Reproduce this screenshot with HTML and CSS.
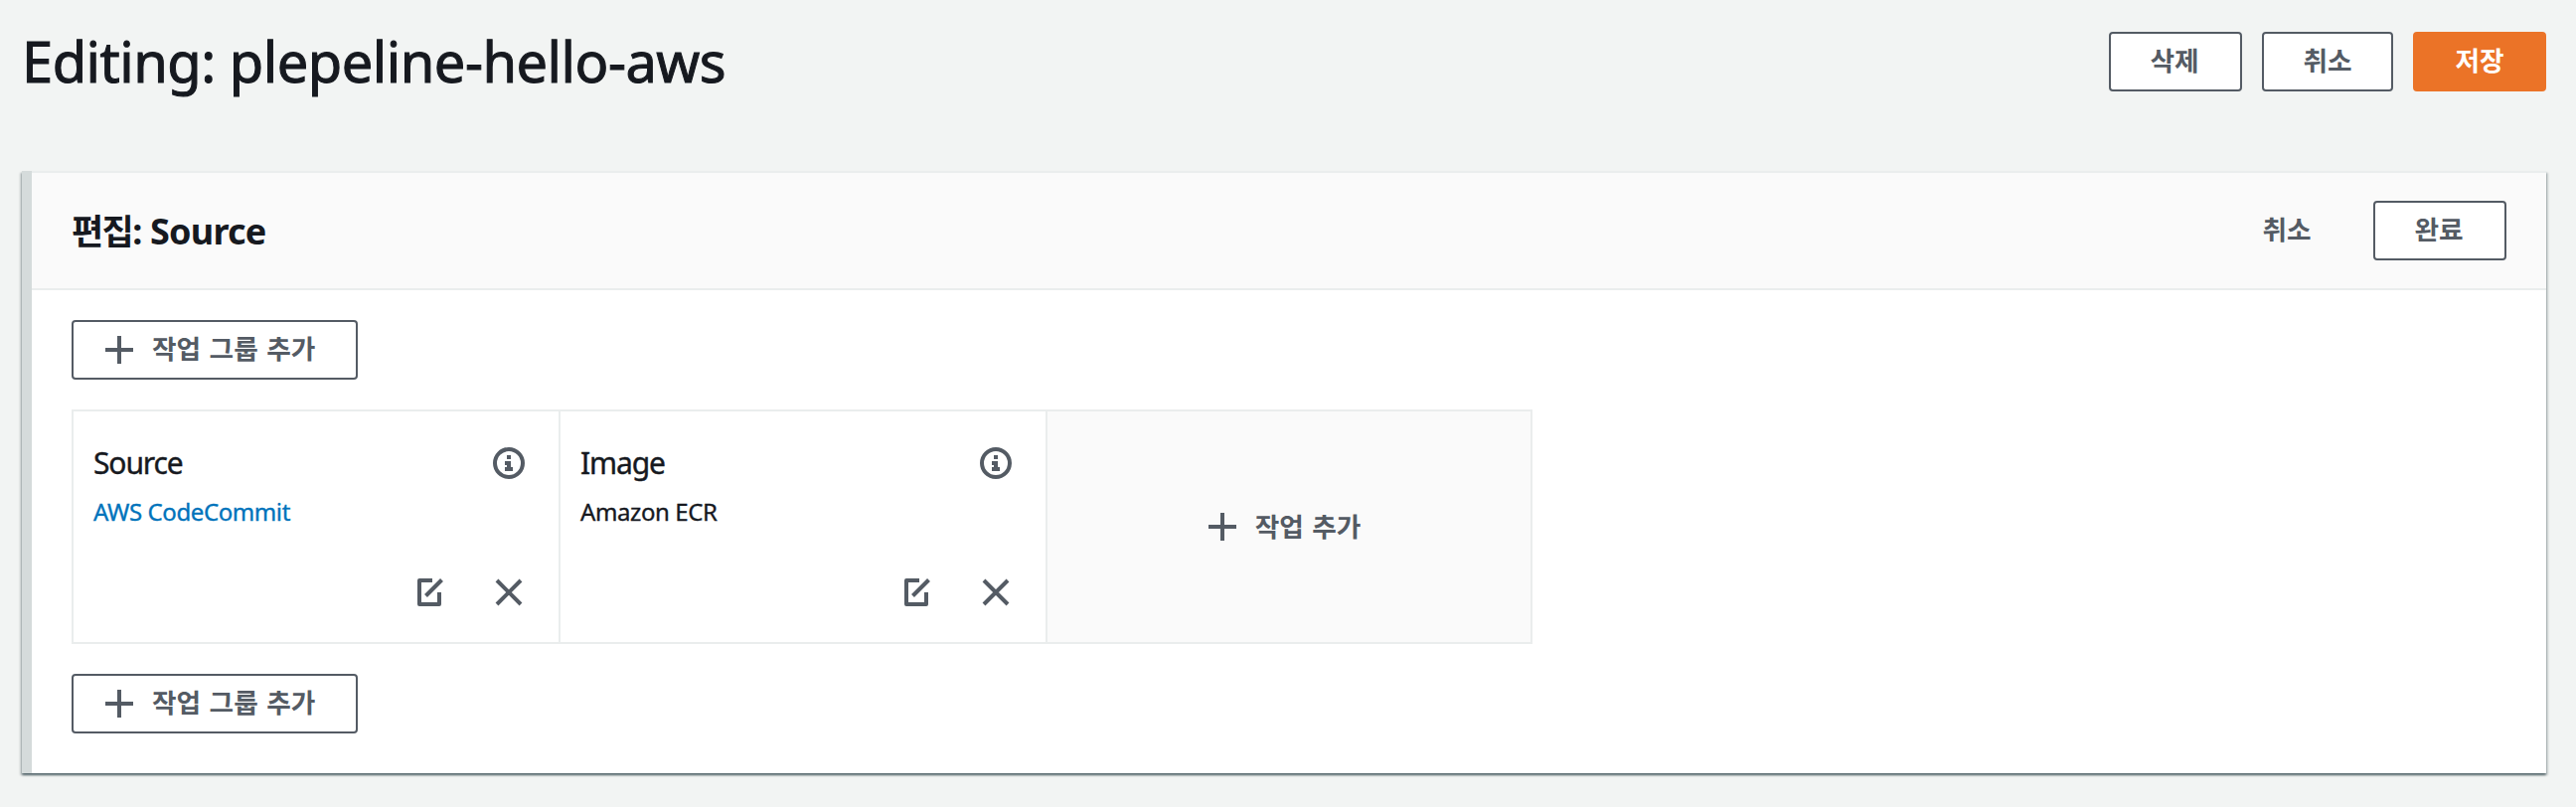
FILE: index.html
```html
<!DOCTYPE html>
<html lang="ko">
<head>
<meta charset="utf-8">
<title>Editing: plepeline-hello-aws</title>
<link rel="stylesheet" href="styles.css">
</head>
<body>
<svg width="0" height="0" class="sprite">
  <symbol id="plus" viewBox="0 0 32 32"><path d="M2 16h28M16 2v28"/></symbol>
  <symbol id="info" viewBox="0 0 32 32"><circle cx="16" cy="16" r="14"/><path class="solid" d="M14 8h4v4h-4zM12 14h6v6h2v4h-8v-4h2v-2h-2z"/></symbol>
  <symbol id="edit" viewBox="0 0 32 32"><path d="M19 4H6v24h20V16" stroke-linejoin="round"/><path d="M28.5 3.5L12.5 19.5"/></symbol>
  <symbol id="close" viewBox="0 0 32 32"><path d="M4 4l24 24M28 4L4 28"/></symbol>
</svg>
<header class="page-header">
  <h1>Editing: plepeline-hello-aws</h1>
  <div class="actions">
    <button class="btn">삭제</button>
    <button class="btn btn-mid">취소</button>
    <button class="btn primary">저장</button>
  </div>
</header>
<main class="stage">
  <div class="stage-header">
    <h2><span class="label">편집</span>: Source</h2>
    <div class="stage-actions">
      <button class="btn link">취소</button>
      <button class="btn">완료</button>
    </div>
  </div>
  <div class="stage-body">
    <button class="btn add-group"><svg class="plus"><use href="#plus"/></svg><span>작업 그룹 추가</span></button>
    <div class="group">
      <section class="cell">
        <div class="row"><h3>Source</h3><svg class="icon"><use href="#info"/></svg></div>
        <a class="provider provider-commit">AWS CodeCommit</a>
        <div class="tools"><svg class="icon edit"><use href="#edit"/></svg><svg class="icon"><use href="#close"/></svg></div>
      </section>
      <section class="cell">
        <div class="row"><h3>Image</h3><svg class="icon"><use href="#info"/></svg></div>
        <p class="provider">Amazon ECR</p>
        <div class="tools"><svg class="icon edit"><use href="#edit"/></svg><svg class="icon"><use href="#close"/></svg></div>
      </section>
      <button class="cell add-action"><svg class="plus"><use href="#plus"/></svg><span>작업 추가</span></button>
    </div>
    <button class="btn add-group"><svg class="plus"><use href="#plus"/></svg><span>작업 그룹 추가</span></button>
  </div>
</main>
</body>
</html>
```

FILE: styles.css
```css
* { box-sizing: border-box; }
body {
  margin: 0;
  height: 812px;
  background: #f2f4f3;
  color: #16191f;
  font-family: "Noto Sans", "Noto Sans CJK KR", sans-serif;
}
h1, h2, h3, p { margin: 0; }
.sprite { display: block; position: absolute; }
svg { fill: none; stroke: #545b64; stroke-width: 4; flex: none; }
.solid { fill: #545b64; stroke: none; }

.page-header {
  height: 172px;
  padding: 32px 30px 0 22px;
  display: flex;
  justify-content: space-between;
  align-items: flex-start;
}
h1 {
  font-size: 56px;
  line-height: 58px;
  font-weight: 400;
  letter-spacing: -.5px;
  -webkit-text-stroke: 1px #16191f;
}
.actions { display: flex; gap: 20px; }

.btn, .add-action {
  font-family: "Noto Sans CJK KR", sans-serif;
  font-size: 26.7px;
  font-weight: 700;
  color: #545b64;
  padding: 0;
}
.btn {
  width: 134px;
  height: 60px;
  line-height: 50px;
  padding: 0 2px 4px 0;
  border: 2px solid #545b64;
  border-radius: 4px;
  background: #fff;
}
.btn-mid { width: 132px; padding-right: 0; }
.primary { background: #eb7327; border-color: #eb7327; color: #fff; padding-right: 0; }
.link { background: transparent; border-color: transparent; width: 132px; padding: 0 0 4px 2px; }

.stage {
  margin: 0 30px 0 22px;
  height: 606px;
  background: #fff;
  border-left: 10px solid #d5dbdb;
  box-shadow: 0 2px 2px 0 rgba(0, 28, 36, .5), 2px 2px 2px 0 rgba(0, 28, 36, .15), -2px 2px 2px 0 rgba(0, 28, 36, .15);
}
.stage-header {
  height: 120px;
  padding: 0 40px;
  display: flex;
  justify-content: space-between;
  align-items: center;
  background: #fafafa;
  border-top: 2px solid #eaeded;
  border-bottom: 2px solid #eaeded;
}
h2 {
  font-size: 36px;
  line-height: 44px;
  padding-top: 2px;
  letter-spacing: -.8px;
}
.label { font-size: 35px; letter-spacing: -1.6px; }
.stage-actions { display: flex; gap: 22px; }
.stage-body { padding: 30px 40px; display: flex; flex-direction: column; align-items: flex-start; gap: 30px; }
.add-group {
  width: 288px;
  padding: 0 0 0 30px;
  display: flex;
  align-items: center;
  gap: 17px;
}
.add-group span, .add-action span { padding-bottom: 4px; white-space: nowrap; word-spacing: 1px; }
.plus { width: 32px; height: 32px; }

.group {
  width: 1470px;
  height: 236px;
  display: grid;
  grid-template-columns: 490px 490px 486px;
  border: 2px solid #eaeded;
}
.cell { padding: 36px 34px 22px 20px; border-right: 2px solid #eaeded; display: flex; flex-direction: column; }
.row { display: flex; justify-content: space-between; align-items: center; height: 32px; }
h3 { font-size: 30px; font-weight: 400; line-height: 32px; letter-spacing: -1.1px; -webkit-text-stroke: .4px #16191f; }
.icon { width: 32px; height: 32px; }
.provider { font-size: 24px; line-height: 32px; margin-top: 17px; letter-spacing: -.4px; -webkit-text-stroke: .35px currentColor; }
.provider-commit { color: #0073bb; }
.tools { display: flex; justify-content: flex-end; gap: 48px; margin-top: 49px; }
.add-action {
  border: 0;
  padding: 0 11px 0 0;
  background: #fafafa;
  flex-direction: row;
  align-items: center;
  justify-content: center;
  gap: 17px;
}
```
